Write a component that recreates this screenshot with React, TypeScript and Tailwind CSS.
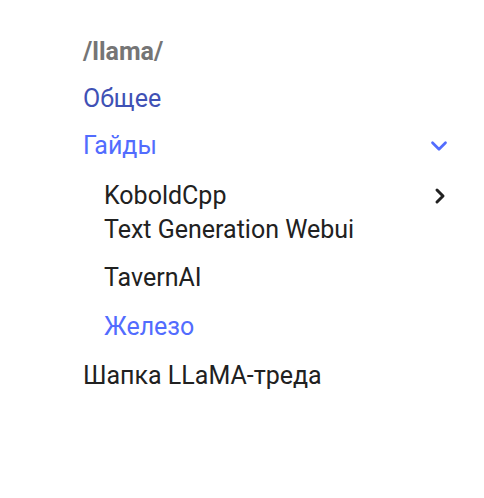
import { ChevronDown, ChevronRight } from "lucide-react"

const App = () => {
  return (
    <div className="min-h-screen bg-white font-['Roboto',sans-serif] text-[25px] text-black/87">
      <nav className="pl-[83px] pr-[36px] pt-[36px]">
        <div className="h-[32px] leading-[32px] font-bold text-[#757575]">/llama/</div>
        <ul className="mt-[15px] flex flex-col">
          <li className="h-[32px] leading-[32px] text-[#3f51b5]">Общее</li>
          <li className="mt-[15px] flex h-[32px] items-center justify-between text-[#526cfe]">
            <span>Гайды</span>
            <ChevronDown className="h-[26px] w-[26px] -mr-[4px]" strokeWidth={2.5} />
          </li>
          <li className="mt-[18px] pl-[21px]">
            <ul className="flex flex-col">
              <li className="flex h-[32px] items-center justify-between text-[#212121]">
                <span>KoboldCpp</span>
                <ChevronRight className="h-[24px] w-[24px] -mr-[4px]" strokeWidth={3} />
              </li>
              <li className="mt-[2px] h-[32px] leading-[32px] text-[#212121]">Text Generation Webui</li>
              <li className="mt-[16px] h-[32px] leading-[32px] text-[#212121]">TavernAI</li>
              <li className="mt-[17px] h-[32px] leading-[32px] text-[#526cfe]">Железо</li>
            </ul>
          </li>
          <li className="mt-[17px] h-[32px] leading-[32px] text-[#212121]">Шапка LLaMA-треда</li>
        </ul>
      </nav>
    </div>
  )
}

export default App
